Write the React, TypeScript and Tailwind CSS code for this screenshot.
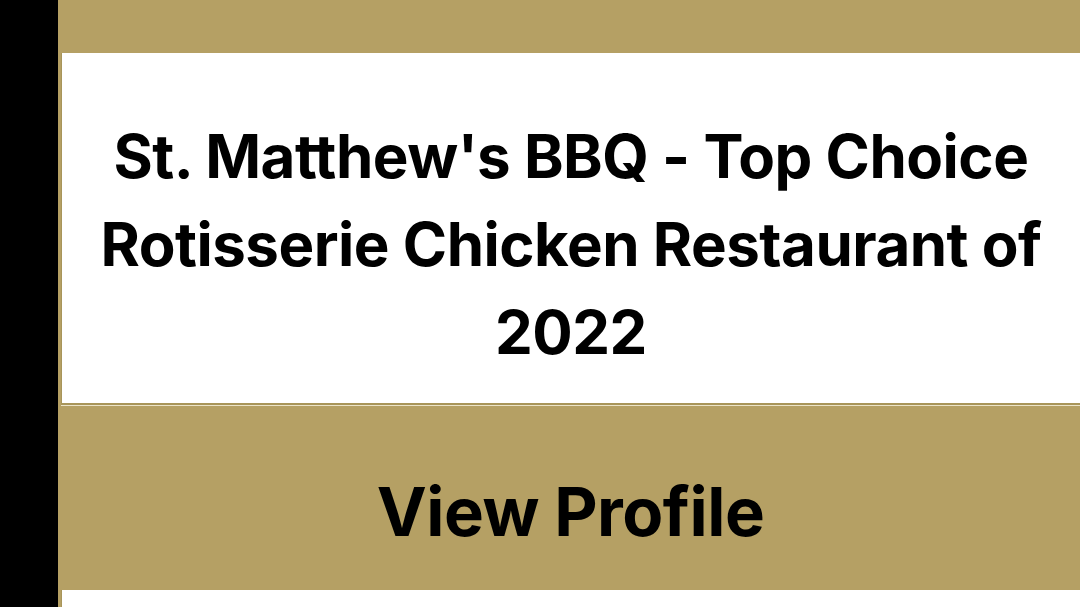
export default function App() {
  return (
    <div className="flex w-[1080px] h-[607px] overflow-hidden bg-black font-['Inter',sans-serif]">
      {/* left black strip */}
      <div className="w-[58px] shrink-0 bg-black" />

      {/* main column with thin gold edge */}
      <div className="flex-1 flex flex-col bg-[#b5a064] pl-[3px]">
        <div className="h-[53px] shrink-0" />

        <section className="h-[350px] shrink-0 bg-white flex items-center justify-center pt-[32px] border-l border-[#a8955a]">
          <h1 className="text-center font-bold text-[60px] leading-[88px] text-black tracking-[-0.5px] px-4">
            St. Matthew's BBQ - Top Choice
            <br />
            Rotisserie Chicken Restaurant of
            <br />
            2022
          </h1>
        </section>

        <div className="h-[2px] bg-[#a8955a]" />
        <div className="h-[1px] bg-[#ece4c8]" />

        <button className="h-[184px] shrink-0 flex items-center justify-center pt-[26px]">
          <span className="font-bold text-[67px] text-black tracking-[-0.5px] leading-none">View Profile</span>
        </button>

        <div className="flex-1 bg-white border-l border-[#a8955a]" />
      </div>
    </div>
  );
}
